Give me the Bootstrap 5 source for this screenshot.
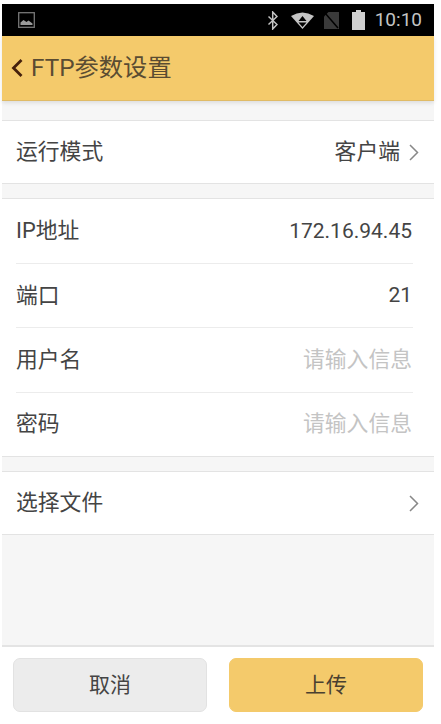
<!doctype html>
<html lang="zh"><head><meta charset="utf-8"><title>FTP参数设置</title>
<link href="https://cdn.jsdelivr.net/npm/bootstrap@5.3.0/dist/css/bootstrap.min.css" rel="stylesheet">
<style>
html,body{height:724px;overflow:hidden;background:#fff}
body{font-family:Roboto,"Noto Sans CJK SC",sans-serif;color:#444;width:441px}
.phone{width:432px;margin-left:2px;padding-top:4px;height:724px}
.sbar{height:32px;background:#000;color:#c4c4c4;font-size:19px;padding:0 12px 0 16px}
.tbar{height:65px;background:#f4ca6b;font-size:24.300px;color:#5a4c32;border-bottom:1px solid #e0bb66;box-shadow:0 2px 4px rgba(0,0,0,.1);position:relative}
.tbar svg{margin:0 8px 0 9px}
.gap-a{height:19px;background:#f6f6f6}
.gap-b{height:14px;background:#f6f6f6}
.gap-c{height:110px;background:#f6f6f6}
.grp{border-top:1px solid #e3e3e3;border-bottom:1px solid #e3e3e3;background:#fff}
.rowx{height:64.25px;font-size:21.8px;margin:0 21px 0 14px;padding-top:1px;border-bottom:1px solid #ececec}
.rowx:first-child{height:65px}
.rowx:last-child{border-bottom:0;height:63.5px}
.rowx.rowone{height:62px}
.numv{font-size:21px;margin-right:1px}
.hint{color:#c4c4c4;margin-right:1px}
.foot{border-top:2px solid #e4e4e4;padding:11px 11px 0 11px;gap:22px}
.bt{flex:1 1 0;height:54px;border-radius:7px;font-size:21px;color:#444;padding:1px 0 0}
.bt-c{background:#ececec;border:1px solid #e2e2e2}
.bt-u{background:#f4ca6b;border:1px solid #f4ca6b;color:#4a4030}
.ic1{margin-right:13px}.ic2{margin-right:10px}.ic3{margin-right:13px}.ic4{margin-right:10px}
.chev{margin-left:9px;margin-right:-6px}
</style></head><body>
<div class="phone">
 <div class="sbar d-flex align-items-center justify-content-between">
  <svg width="17" height="16" viewBox="0 0 17 16" fill="none"><rect x=".7" y=".7" width="15.6" height="14.6" stroke="#777" stroke-width="1.3"/><path d="M2.5 13v-2.5l3-2.5 3 2 2-1.5 4 3v1.500z" fill="#999"/></svg>
  <div class="d-flex align-items-center">
   <svg class="ic1" width="10" height="19" viewBox="0 0 10 19" fill="none" stroke="#c4c4c4" stroke-width="1.500"><path d="M.5 5.500l8.500 8-4.300 4.500V1L9 5.500.5 13.500"/></svg>
   <svg class="ic2" width="23" height="17" viewBox="0 0 23 17"><path d="M0 4Q11.500-3 23 4L11.500 17z" fill="#c4c4c4"/><path d="M11.500 4l4 5h-8zM7.500 10.500h8l-4 4.500z" fill="#000"/></svg>
   <svg class="ic3" width="15" height="17" viewBox="0 0 15 17"><path d="M4.500 0H15v17H0V4.500z" fill="#3a3a3a"/><path d="M1 1l13 15" stroke="#000" stroke-width="1.500"/></svg>
   <svg class="ic4" width="13" height="20" viewBox="0 0 13 20"><path d="M4 0h5v2h4v18H0V2h4z" fill="#d0d0d0"/></svg>
   <span>10:10</span>
  </div>
 </div>
 <div class="tbar d-flex align-items-center">
  <svg width="12" height="20" viewBox="0 0 12 20" fill="none" stroke="#45200c" stroke-width="2.800"><path d="M10.500 2L2.500 10l8 8"/></svg>
  <span>FTP参数设置</span>
 </div>
 <div class="gap-a"></div>
 <div class="grp"><div class="rowx rowone d-flex align-items-center justify-content-between"><span>运行模式</span><span class="d-flex align-items-center">客户端<svg class="chev" width="10" height="17" viewBox="0 0 10 17" fill="none" stroke="#888" stroke-width="1.500"><path d="M1 1l7.500 7.500L1 16"/></svg></span></div></div>
 <div class="gap-b"></div>
 <div class="grp">
  <div class="rowx d-flex align-items-center justify-content-between"><span>IP地址</span><span class="numv">172.16.94.45</span></div>
  <div class="rowx d-flex align-items-center justify-content-between"><span>端口</span><span class="numv">21</span></div>
  <div class="rowx d-flex align-items-center justify-content-between"><span>用户名</span><span class="hint">请输入信息</span></div>
  <div class="rowx d-flex align-items-center justify-content-between"><span>密码</span><span class="hint">请输入信息</span></div>
 </div>
 <div class="gap-b"></div>
 <div class="grp"><div class="rowx rowone d-flex align-items-center justify-content-between"><span>选择文件</span><svg class="chev" width="10" height="17" viewBox="0 0 10 17" fill="none" stroke="#888" stroke-width="1.500"><path d="M1 1l7.500 7.500L1 16"/></svg></div></div>
 <div class="gap-c"></div>
 <div class="foot d-flex">
  <button class="btn bt bt-c">取消</button>
  <button class="btn bt bt-u">上传</button>
 </div>
</div>
</body></html>
